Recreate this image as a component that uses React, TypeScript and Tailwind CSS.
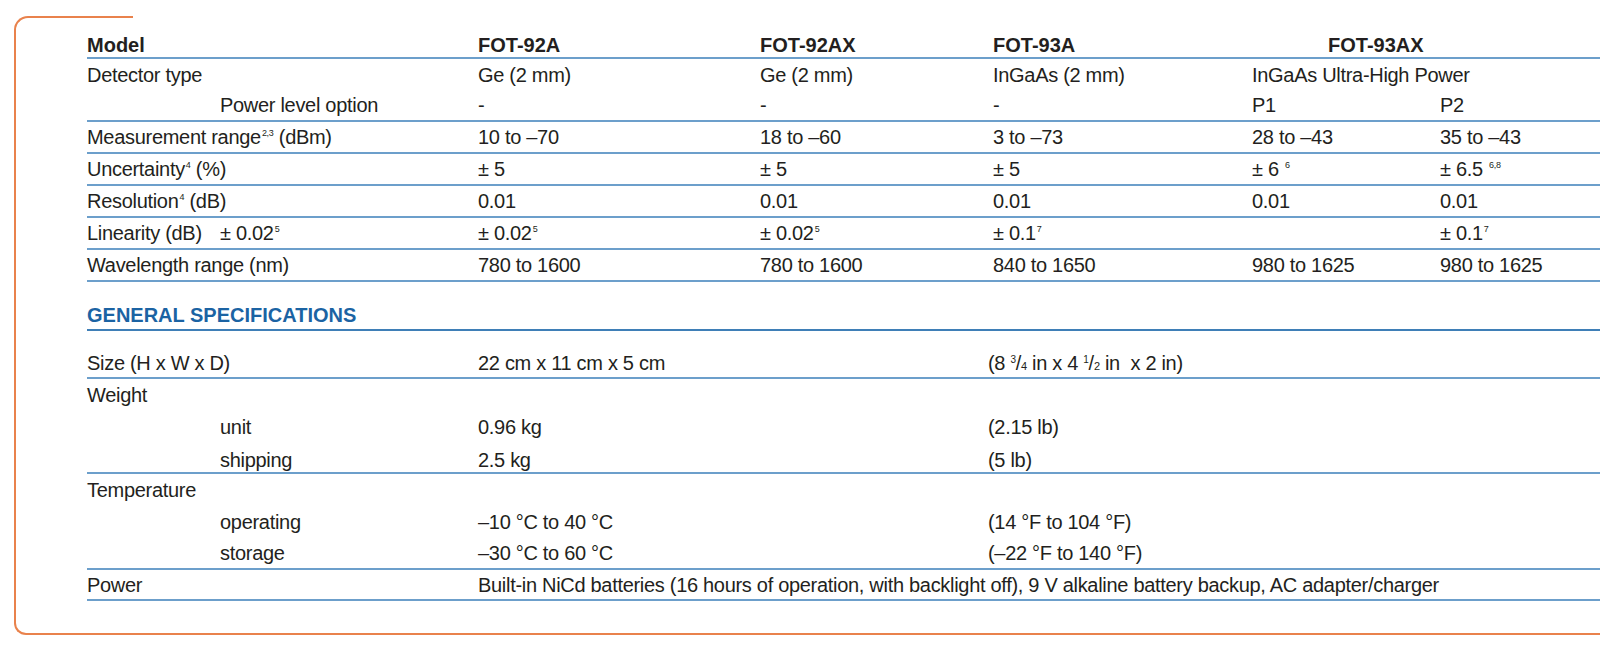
import React from "react";

const cols = "grid grid-cols-[391px_282px_233px_259px_188px_1fr]";
const line = "border-b-2 border-[#6c9fcb]";

function Sup({ children }: { children: React.ReactNode }) {
  return <sup className="text-[9px] -top-[8px] ml-[1px]">{children}</sup>;
}

function Row({
  cells,
  h = "h-[32px]",
  border = true,
}: {
  cells: React.ReactNode[];
  h?: string;
  border?: boolean;
}) {
  return (
    <div className={`${cols} ${h} items-center ${border ? line : ""}`}>
      {cells.map((c, i) => (
        <div key={i} className="whitespace-nowrap">
          {c}
        </div>
      ))}
    </div>
  );
}

function SpecRow({
  label,
  a,
  b,
  h = "h-[30px]",
  indent = false,
  align = "items-center",
}: {
  label: React.ReactNode;
  a?: React.ReactNode;
  b?: React.ReactNode;
  h?: string;
  indent?: boolean;
  align?: string;
}) {
  return (
    <div className={`grid grid-cols-[391px_510px_1fr] ${h} ${align}`}>
      <div className={`whitespace-nowrap ${indent ? "pl-[133px]" : ""}`}>{label}</div>
      <div className="whitespace-nowrap">{a}</div>
      <div className="whitespace-nowrap">{b}</div>
    </div>
  );
}

function Frac({ n, d }: { n: string; d: string }) {
  return (
    <span>
      <span className="relative -top-[7px] text-[10px] leading-none">{n}</span>/
      <span className="text-[11px] leading-none">{d}</span>
    </span>
  );
}

export default function App() {
  return (
    <div
      className="w-[1600px] h-[651px] overflow-hidden bg-white text-[#231f20] text-[20px] leading-[24px] tracking-[-0.3px]"
      style={{ fontFamily: '"Liberation Sans", Arial, sans-serif' }}
    >
      <div className="pl-[14px] pt-[16px]">
        <div className="h-[14px] w-[119px] rounded-tl-[14px] border-l-2 border-t-2 border-[#e9824c]" />
        <div className="border-l-2 border-b-2 border-[#e9824c] rounded-bl-[12px] pl-[71px] pb-[32px]">
          {/* header */}
          <div className={`${cols} h-[29px] pt-[2px] items-center font-bold tracking-normal ${line}`}>
            <div>Model</div>
            <div>FOT-92A</div>
            <div>FOT-92AX</div>
            <div>FOT-93A</div>
            <div className="col-span-2 pl-[76px]">FOT-93AX</div>
          </div>

          {/* detector group */}
          <div className={line}>
            <div className={`${cols} h-[31px] items-center`}>
              <div>Detector type</div>
              <div>Ge (2 mm)</div>
              <div>Ge (2 mm)</div>
              <div>InGaAs (2 mm)</div>
              <div className="col-span-2 whitespace-nowrap">InGaAs Ultra-High Power</div>
            </div>
            <Row
              h="h-[30px]"
              border={false}
              cells={[<span className="pl-[133px]">Power level option</span>, "-", "-", "-", "P1", "P2"]}
            />
          </div>

          <Row
            cells={[
              <span>
                Measurement range<Sup>2,3</Sup> (dBm)
              </span>,
              "10 to \u201370",
              "18 to \u201360",
              "3 to \u201373",
              "28 to \u201343",
              "35 to \u201343",
            ]}
          />
          <Row
            cells={[
              <span>
                Uncertainty<Sup>4</Sup> (%)
              </span>,
              "\u00b1 5",
              "\u00b1 5",
              "\u00b1 5",
              <span>
                {"\u00b1 6 "}
                <Sup>6</Sup>
              </span>,
              <span>
                {"\u00b1 6.5 "}
                <Sup>6,8</Sup>
              </span>,
            ]}
          />
          <Row
            cells={[
              <span>
                Resolution<Sup>4</Sup> (dB)
              </span>,
              "0.01",
              "0.01",
              "0.01",
              "0.01",
              "0.01",
            ]}
          />
          <Row
            cells={[
              <span className="flex">
                <span className="w-[133px]">Linearity (dB)</span>
                <span>
                  {"\u00b1 0.02"}
                  <Sup>5</Sup>
                </span>
              </span>,
              <span>
                {"\u00b1 0.02"}
                <Sup>5</Sup>
              </span>,
              <span>
                {"\u00b1 0.02"}
                <Sup>5</Sup>
              </span>,
              <span>
                {"\u00b1 0.1"}
                <Sup>7</Sup>
              </span>,
              "",
              <span>
                {"\u00b1 0.1"}
                <Sup>7</Sup>
              </span>,
            ]}
          />
          <Row
            cells={["Wavelength range (nm)", "780 to 1600", "780 to 1600", "840 to 1650", "980 to 1625", "980 to 1625"]}
          />

          {/* general specifications */}
          <div className="h-[49px] flex items-end pb-[2px] border-b-2 border-[#3f7fb7]">
            <h2 className="font-bold tracking-normal text-[#1b63a3]">GENERAL SPECIFICATIONS</h2>
          </div>

          <div className={line}>
            <SpecRow
              h="h-[46px]"
              align="items-end pb-[2px]"
              label="Size (H x W x D)"
              a="22 cm x 11 cm x 5 cm"
              b={
                <span>
                  (8 <Frac n="3" d="4" /> in x 4 <Frac n="1" d="2" /> in&nbsp; x 2 in)
                </span>
              }
            />
          </div>

          <div className={line}>
            <SpecRow h="h-[31px]" label="Weight" />
            <SpecRow h="h-[33px]" indent label="unit" a="0.96 kg" b="(2.15 lb)" />
            <SpecRow h="h-[29px]" align="items-end" indent label="shipping" a="2.5 kg" b="(5 lb)" />
          </div>

          <div className={line}>
            <SpecRow h="h-[32px]" label="Temperature" />
            <SpecRow
              h="h-[32px]"
              indent
              label="operating"
              a={"\u201310 \u00b0C to 40 \u00b0C"}
              b={"(14 \u00b0F to 104 \u00b0F)"}
            />
            <SpecRow
              h="h-[30px]"
              indent
              label="storage"
              a={"\u201330 \u00b0C to 60 \u00b0C"}
              b={"(\u201322 \u00b0F to 140 \u00b0F)"}
            />
          </div>

          <div className={`grid grid-cols-[391px_1fr] h-[31px] items-center ${line}`}>
            <div>Power</div>
            <div className="whitespace-nowrap">
              Built-in NiCd batteries (16 hours of operation, with backlight off), 9 V alkaline battery backup, AC
              adapter/charger
            </div>
          </div>
        </div>
      </div>
    </div>
  );
}
